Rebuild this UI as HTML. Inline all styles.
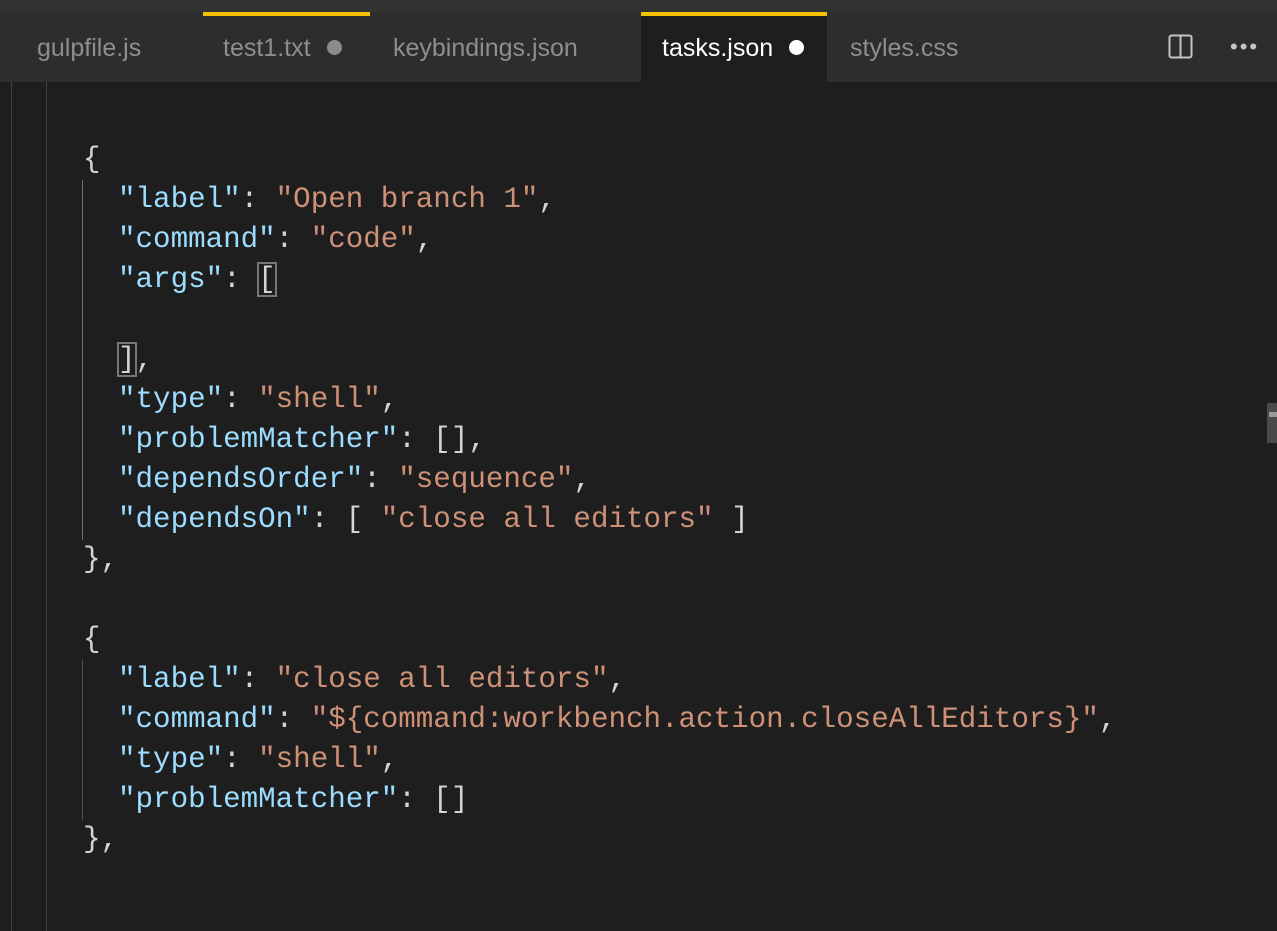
<!DOCTYPE html>
<html><head><meta charset="utf-8"><style>
*{margin:0;padding:0;box-sizing:border-box}
body{width:1277px;height:931px;background:#1e1e1e;overflow:hidden;position:relative;font-family:"Liberation Sans",sans-serif}
.top{position:absolute;left:0;top:0;width:1277px;height:12px;background:#323232}
.bar{position:absolute;left:0;top:12px;width:1277px;height:70px;background:#2d2d2d}
.tab{position:absolute;top:12px;height:70px;font-size:25px;color:#8e8e8e;line-height:72px}
.act{background:#1e1e1e;color:#fff}
.ind{position:absolute;top:12px;height:4px;background:#f5c400}
.dot{display:inline-block;width:15px;height:15px;border-radius:50%;background:#8b8b8b;margin-left:16px;vertical-align:1px}
.code{position:absolute;left:0;top:140px;font-family:"Liberation Mono",monospace;font-size:29.2px;line-height:40px;color:#d4d4d4;white-space:pre}
.code div{height:40px}
.k{color:#9cdcfe}.s{color:#ce9178}
.g{position:absolute;width:1px;background:#404040}
.box{outline:2px solid #777;outline-offset:-1px}
</style></head><body>
<div class="top"></div><div class="bar"></div>
<div class="tab" style="left:37px">gulpfile.js</div>
<div class="tab" style="left:223px">test1.txt<span class="dot"></span></div>
<div class="ind" style="left:203px;width:167px"></div>
<div class="tab" style="left:393px">keybindings.json</div>
<div class="tab act" style="left:641px;width:186px;padding-left:21px">tasks.json<span class="dot" style="background:#fff"></span></div>
<div class="ind" style="left:641px;width:186px"></div>
<div class="tab" style="left:850px">styles.css</div>
<svg style="position:absolute;left:1168px;top:34px" width="26" height="26"><rect x="1.5" y="1.5" width="22" height="22" rx="2" fill="none" stroke="#c5c5c5" stroke-width="2"/><line x1="12.5" y1="2" x2="12.5" y2="24" stroke="#c5c5c5" stroke-width="2"/></svg>
<div style="position:absolute;left:1230px;top:34px;color:#c5c5c5;font-size:22px;letter-spacing:2px">•••</div>
<div class="g" style="left:11px;top:82px;height:849px"></div>
<div class="g" style="left:46px;top:82px;height:849px"></div>
<div class="g" style="left:82px;top:180px;height:360px;background:#707070"></div>
<div class="g" style="left:82px;top:660px;height:160px;background:#505050"></div>
<div class="code" style="left:83px"><div>{</div><div>  <span class="k">"label"</span>: <span class="s">"Open branch 1"</span>,</div><div>  <span class="k">"command"</span>: <span class="s">"code"</span>,</div><div>  <span class="k">"args"</span>: <span class="box">[</span></div><div> </div><div>  <span class="box">]</span>,</div><div>  <span class="k">"type"</span>: <span class="s">"shell"</span>,</div><div>  <span class="k">"problemMatcher"</span>: [],</div><div>  <span class="k">"dependsOrder"</span>: <span class="s">"sequence"</span>,</div><div>  <span class="k">"dependsOn"</span>: [ <span class="s">"close all editors"</span> ]</div><div>},</div><div> </div><div>{</div><div>  <span class="k">"label"</span>: <span class="s">"close all editors"</span>,</div><div>  <span class="k">"command"</span>: <span class="s">"${command:workbench.action.closeAllEditors}"</span>,</div><div>  <span class="k">"type"</span>: <span class="s">"shell"</span>,</div><div>  <span class="k">"problemMatcher"</span>: []</div><div>},</div></div>
<div style="position:absolute;left:1267px;top:403px;width:10px;height:40px;background:#4a4a4a"></div>
<div style="position:absolute;left:1269px;top:412px;width:8px;height:5px;background:#999"></div>
</body></html>
